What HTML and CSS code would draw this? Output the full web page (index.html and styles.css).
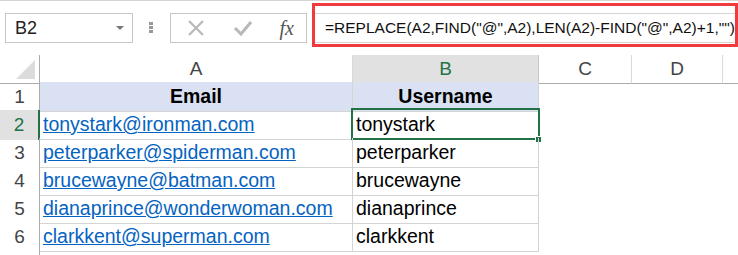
FILE: index.html
```html
<!DOCTYPE html>
<html lang="en">
<head>
    <meta charset="UTF-8">
    <title>Username from email</title>
    <link rel="stylesheet" href="styles.css">
</head>
<body>
    <div class="toolbar">
        <div class="namebox">
            <span>B2</span>
            <span class="caret"></span>
        </div>
        <div class="dots"><i></i><i></i><i></i></div>
        <div class="fx-buttons">
            <svg width="20" height="20" viewBox="0 0 20 20"><path d="M3 3 L17 17 M17 3 L3 17" stroke="#b8b8b8" stroke-width="2.2" fill="none"/></svg>
            <svg width="22" height="20" viewBox="0 0 22 20"><path d="M3 10 L9 16 L19 4" stroke="#b8b8b8" stroke-width="3" fill="none"/></svg>
            <span class="fx">fx</span>
        </div>
        <div class="formula-wrap">
            <div class="formula">=REPLACE(A2,FIND("@",A2),LEN(A2)-FIND("@",A2)+1,"")</div>
        </div>
    </div>

    <div class="sheet">
        <div class="row head-row">
            <div class="corner"><span class="tri"></span></div>
            <div class="col-head">A</div>
            <div class="col-head active">B</div>
            <div class="col-head">C</div>
            <div class="col-head">D</div>
            <div class="col-head last"></div>
        </div>
        <div class="row">
            <div class="row-head">1</div>
            <div class="cell title">Email</div>
            <div class="cell title">Username</div>
        </div>
        <div class="row">
            <div class="row-head active">2</div>
            <div class="cell"><a href="#">tonystark@ironman.com</a></div>
            <div class="cell selected">tonystark<span class="sel-box"></span><span class="handle"></span></div>
        </div>
        <div class="row">
            <div class="row-head">3</div>
            <div class="cell"><a href="#">peterparker@spiderman.com</a></div>
            <div class="cell">peterparker</div>
        </div>
        <div class="row">
            <div class="row-head">4</div>
            <div class="cell"><a href="#">brucewayne@batman.com</a></div>
            <div class="cell">brucewayne</div>
        </div>
        <div class="row">
            <div class="row-head">5</div>
            <div class="cell"><a href="#">dianaprince@wonderwoman.com</a></div>
            <div class="cell">dianaprince</div>
        </div>
        <div class="row">
            <div class="row-head">6</div>
            <div class="cell"><a href="#">clarkkent@superman.com</a></div>
            <div class="cell">clarkkent</div>
        </div>
        <div class="row tail-row">
            <div class="row-head"></div>
        </div>
    </div>
</body>
</html>
```

FILE: styles.css
```css
body {
    margin: 0;
    background-color: #fff;
    font-family: "Liberation Sans", Arial, sans-serif;
    color: #000;
    overflow: hidden;
}

/* formula bar */
.toolbar {
    height: 55px;
    box-sizing: border-box;
    border-top: 1px solid #d5d5d5;
    padding-top: 12px;
    display: flex;
    align-items: flex-start;
}

.toolbar > * {
    flex-shrink: 0;
}

.namebox {
    margin-left: 5px;
    width: 128px;
    height: 30px;
    box-sizing: border-box;
    border: 1px solid #c6c6c6;
    display: flex;
    align-items: center;
    justify-content: space-between;
    padding: 0 8px 0 9px;
    font-size: 18px;
    color: #222;
}

.caret {
    width: 0;
    height: 0;
    border-left: 4px solid transparent;
    border-right: 4px solid transparent;
    border-top: 4px solid #777;
}

.dots {
    margin: 9px 16px 0 16px;
    width: 5px;
    display: flex;
    flex-direction: column;
    gap: 1px;
}

.dots i {
    display: block;
    width: 4px;
    height: 3px;
    background-color: #999;
}

.fx-buttons {
    width: 137px;
    height: 30px;
    box-sizing: border-box;
    border: 1px solid #c6c6c6;
    display: flex;
    align-items: center;
    justify-content: space-between;
    padding: 0 12px 0 15px;
}

.fx {
    font-family: "Liberation Serif", serif;
    font-style: italic;
    font-size: 20px;
    color: #555;
}

.formula-wrap {
    margin: -10px 0 0 5px;
    flex: 1;
    flex-shrink: 1;
    min-width: 0;
    height: 44px;
    box-sizing: border-box;
    border: 3px solid #ef3b3f;
    padding: 7px 0 1px 0;
}

.formula {
    height: 30px;
    box-sizing: border-box;
    border-top: 1px solid #d4d4d4;
    border-bottom: 1px solid #d4d4d4;
    padding-left: 10px;
    font-size: 15.5px;
    line-height: 28px;
    white-space: nowrap;
    overflow: hidden;
    color: #111;
}

/* sheet */
.row {
    display: grid;
    grid-template-columns: 40px 313px 186px 93px 91px 1fr;
    height: 28px;
}

.head-row {
    height: 27px;
}

.tail-row {
    height: 5px;
}

.corner {
    border-right: 1px solid #ababab;
    border-bottom: 1px solid #ababab;
    position: relative;
}

.tri {
    position: absolute;
    right: 4px;
    bottom: 4px;
    width: 0;
    height: 0;
    border-left: 19px solid transparent;
    border-bottom: 19px solid #dcdcdc;
}

.col-head {
    border-right: 1px solid #dadada;
    border-bottom: 1px solid #ababab;
    text-align: center;
    font-size: 19px;
    line-height: 27px;
    color: #444;
}

.col-head.active {
    background-color: #e1e1e1;
    color: #217346;
    border-bottom: 2px solid #217346;
    border-right-color: #c9c9c9;
}

.col-head.last {
    border-right: none;
}

.row-head {
    border-right: 1px solid #ababab;
    text-align: center;
    font-size: 19px;
    line-height: 30px;
    color: #444;
}

.row-head.active {
    background-color: #e1e1e1;
    color: #217346;
    border-right: 2px solid #217346;
}

.cell {
    border-right: 1px solid #d4d4d4;
    border-bottom: 1px solid #d4d4d4;
    padding-left: 3px;
    font-size: 19.5px;
    line-height: 29px;
    white-space: nowrap;
    position: relative;
}

.cell a {
    color: #0563c1;
}

.title {
    background-color: #d9e1f2;
    font-weight: bold;
    text-align: center;
    padding-left: 0;
}

.sel-box {
    position: absolute;
    left: -2px;
    top: -2px;
    right: -2px;
    bottom: -1px;
    border: 2px solid #217346;
}

.handle {
    position: absolute;
    right: -4px;
    bottom: -4px;
    width: 5px;
    height: 5px;
    background-color: #217346;
    border: 1px solid #fff;
}
```
